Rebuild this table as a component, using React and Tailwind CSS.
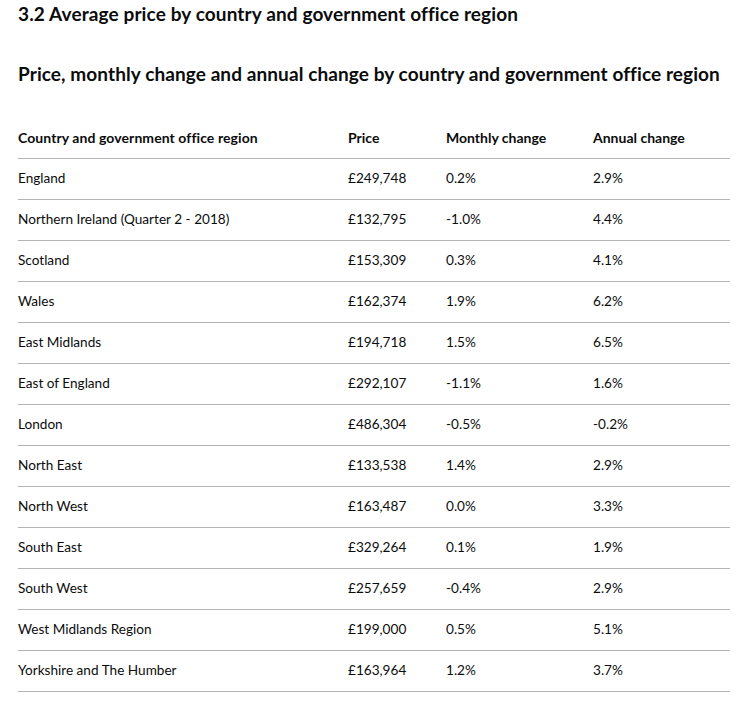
import React from "react";

const rows = [
  ["England", "£249,748", "0.2%", "2.9%"],
  ["Northern Ireland (Quarter 2 - 2018)", "£132,795", "-1.0%", "4.4%"],
  ["Scotland", "£153,309", "0.3%", "4.1%"],
  ["Wales", "£162,374", "1.9%", "6.2%"],
  ["East Midlands", "£194,718", "1.5%", "6.5%"],
  ["East of England", "£292,107", "-1.1%", "1.6%"],
  ["London", "£486,304", "-0.5%", "-0.2%"],
  ["North East", "£133,538", "1.4%", "2.9%"],
  ["North West", "£163,487", "0.0%", "3.3%"],
  ["South East", "£329,264", "0.1%", "1.9%"],
  ["South West", "£257,659", "-0.4%", "2.9%"],
  ["West Midlands Region", "£199,000", "0.5%", "5.1%"],
  ["Yorkshire and The Humber", "£163,964", "1.2%", "3.7%"],
];

export default function App() {
  return (
    <div
      className="bg-white text-[#0b0c0c] px-[18px] w-[749px] h-[701px] overflow-hidden"
      style={{ fontFamily: 'Lato, "Liberation Sans", Arial, sans-serif' }}
    >
      <h2 className="text-[19px] font-bold leading-[25px] pt-[1px] whitespace-nowrap tracking-[0.12px]">
        3.2 Average price by country and government office region
      </h2>
      <h3 className="text-[19px] font-bold leading-[25px] mt-[35px] whitespace-nowrap tracking-[0.09px]">
        Price, monthly change and annual change by country and government office region
      </h3>
      <table className="mt-[32px] w-[712px] border-collapse text-[14px] leading-[20px]">
        <thead>
          <tr className="border-b border-[#b1b4b6]">
            <th className="w-[330px] text-left font-bold py-[10px] tracking-[0.08px]">Country and government office region</th>
            <th className="w-[98px] text-left font-bold py-[10px]">Price</th>
            <th className="w-[147px] text-left font-bold py-[10px]">Monthly change</th>
            <th className="text-left font-bold py-[10px]">Annual change</th>
          </tr>
        </thead>
        <tbody className="text-[13.6px]">
          {rows.map((r) => (
            <tr key={r[0]} className="border-b border-[#b1b4b6]">
              {r.map((c, i) => (
                <td key={i} className="pt-[9px] pb-[11px] text-left">{c}</td>
              ))}
            </tr>
          ))}
        </tbody>
      </table>
    </div>
  );
}
